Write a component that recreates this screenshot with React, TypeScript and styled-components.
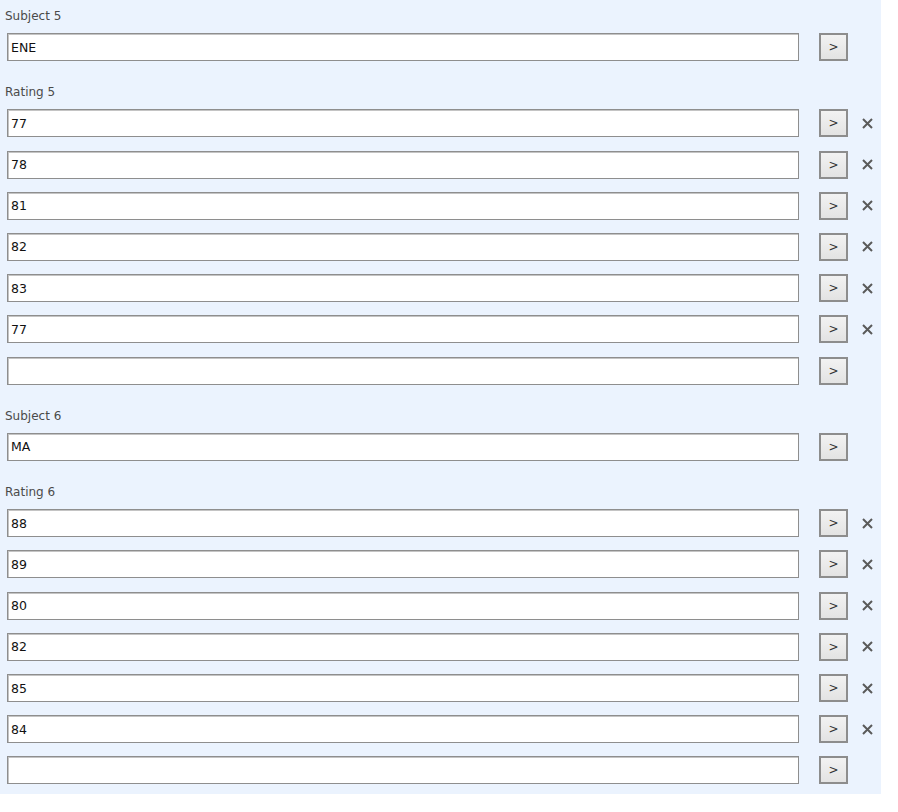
import React from 'react';
import styled, { createGlobalStyle } from 'styled-components';

const GlobalStyle = createGlobalStyle`
  body {
    margin: 0;
    background: #fff;
    font-family: "DejaVu Sans", Verdana, sans-serif;
  }
`;

const Panel = styled.div`
  width: 881px;
  box-sizing: border-box;
  background-color: #ebf3fe;
  padding: 6px 0 10px 0;
  display: flex;
  flex-direction: column;
  gap: 21.4px;
`;

const Group = styled.div`
  display: flex;
  flex-direction: column;
`;

const Label = styled.div`
  font-size: 12px;
  line-height: 20px;
  height: 20px;
  color: #4a4a4a;
  padding-left: 5px;
  margin-bottom: 7px;
`;

const RowList = styled.div`
  display: flex;
  flex-direction: column;
  gap: 13.2px;
`;

const Row = styled.div`
  display: flex;
  align-items: center;
  padding-left: 7px;
  height: 28px;
`;

const TextBox = styled.input`
  width: 792px;
  height: 28px;
  box-sizing: border-box;
  border: 1px solid #8e8e8e;
  box-shadow: inset 1px 1px 0 #c4c4c4;
  background: #fff;
  padding: 0 3px;
  font-family: "DejaVu Sans", Verdana, sans-serif;
  font-size: 12.5px;
  color: #111;
  outline: none;
`;

const GoButton = styled.button`
  margin-left: 20px;
  width: 29px;
  height: 28px;
  box-sizing: border-box;
  border: 2px solid #8d8d8d;
  background: linear-gradient(to bottom, #f2f2f2 0%, #e3e3e3 100%);
  font-family: "DejaVu Sans", Verdana, sans-serif;
  font-size: 12px;
  color: #333;
  padding: 0;
  cursor: pointer;
`;

const Remove = styled.span`
  margin-left: 12px;
  width: 14px;
  height: 14px;
  display: flex;
  align-items: center;
  justify-content: center;
`;

const CrossIcon = () => (
  <svg width="13" height="13" viewBox="0 0 13 13">
    <path d="M2 2 L11 11 M11 2 L2 11" stroke="#5a5a5a" strokeWidth="2" />
  </svg>
);

type FieldRowProps = {
  value: string;
  removable?: boolean;
};

const FieldRow: React.FC<FieldRowProps> = ({ value, removable }) => (
  <Row>
    <TextBox defaultValue={value} />
    <GoButton>&gt;</GoButton>
    {removable && (
      <Remove>
        <CrossIcon />
      </Remove>
    )}
  </Row>
);

type Subject = {
  index: number;
  name: string;
  ratings: string[];
};

const subjects: Subject[] = [
  { index: 5, name: 'ENE', ratings: ['77', '78', '81', '82', '83', '77'] },
  { index: 6, name: 'MA', ratings: ['88', '89', '80', '82', '85', '84'] },
];

export default function App() {
  return (
    <>
      <GlobalStyle />
      <Panel>
        {subjects.map((s) => (
          <React.Fragment key={s.index}>
            <Group>
              <Label>Subject {s.index}</Label>
              <FieldRow value={s.name} />
            </Group>
            <Group>
              <Label>Rating {s.index}</Label>
              <RowList>
                {s.ratings.map((r, i) => (
                  <FieldRow key={i} value={r} removable />
                ))}
                <FieldRow value="" />
              </RowList>
            </Group>
          </React.Fragment>
        ))}
      </Panel>
    </>
  );
}
